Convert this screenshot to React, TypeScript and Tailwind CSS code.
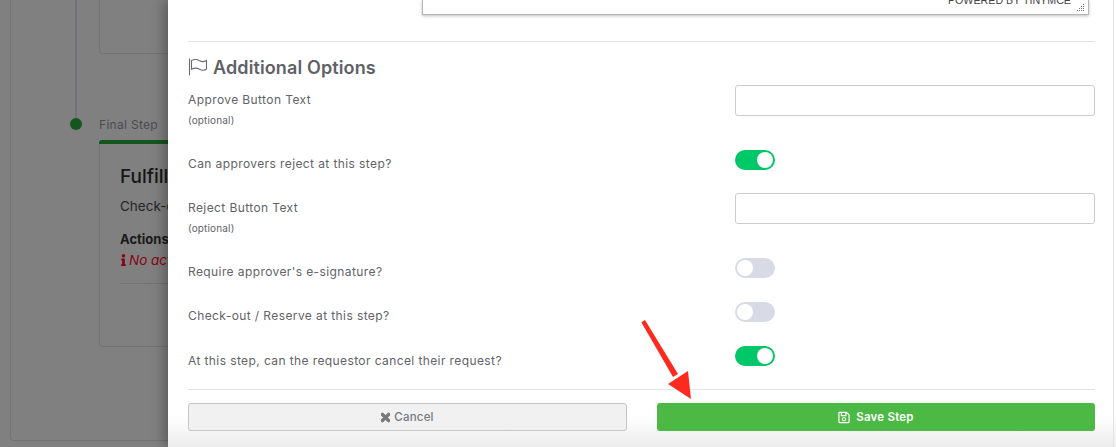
import { FaInfo, FaRegSave, FaTimes } from "react-icons/fa";

const font = { fontFamily: "Inter, 'Noto Sans', sans-serif" };

function Toggle({ on }: { on: boolean }) {
  return (
    <div className={`w-10 h-5 rounded-full flex items-center p-[2px] ${on ? "bg-[#00c767] justify-end" : "bg-[#d8dbe5] justify-start"}`}>
      <div className="w-4 h-4 rounded-full bg-white" />
    </div>
  );
}

function Row({ label, optional, height, pad, children }: { label: string; optional?: boolean; height: string; pad: string; children: React.ReactNode }) {
  return (
    <div className={`flex ${height}`}>
      <div className={`w-[547px] ${pad}`}>
        <div className="text-[12px] leading-5 tracking-[0.4px] text-[#626368]">{label}</div>
        {optional && <div className="mt-[3px] text-[10px] leading-[14px] tracking-[0.15px] text-[#626368]">(optional)</div>}
      </div>
      <div className="w-[360px]">{children}</div>
    </div>
  );
}

function TextBox() {
  return <input className="w-full h-[31px] rounded-[3px] border border-[#c9ccd6] bg-white" />;
}

export default function App() {
  return (
    <div className="relative w-[1116px] h-[447px] overflow-hidden bg-[#808080]" style={font}>
      {/* page behind the modal */}
      <div className="absolute inset-0 pl-[10px] pb-[6px]">
        <div className="h-full rounded-b-[4px] border-l border-b border-[#737373] pl-[58px] relative">
          <div className="flex">
            <div className="w-[24px] shrink-0 flex flex-col items-center -ml-[5px]">
              <div className="w-[2px] h-[118px] bg-[#72727a]" />
              <div className="w-3 h-3 rounded-full bg-[#15561f]" />
            </div>
            <div className="w-[300px] ml-[11px]">
              <div className="h-[54px] rounded-b-[4px] border-l border-b border-[#737373]" />
              <div className="mt-[61px] text-[12px] leading-5 tracking-[0.3px] text-[#4c4c4f]">Final Step</div>
              <div className="mt-[5px] h-[4px] rounded-t-[3px] bg-[#15561f]" />
              <div className="h-[203px] rounded-b-[4px] border-l border-b border-[#737373] pl-[20px] pt-[21px]">
                <div className="text-[19px] leading-6 font-medium text-[#161616]">Fulfillment</div>
                <div className="mt-[7px] text-[13.5px] leading-5 text-[#262626]">Check-out</div>
                <div className="mt-[13px] text-[13px] leading-5 font-bold text-[#1a1a1a]">Actions</div>
                <div className="mt-[1px] flex items-center text-[13.5px] leading-5 italic text-[#8a0012]">
                  <FaInfo className="w-[7px] h-[12px] mr-[2px]" />
                  <span>No actions</span>
                </div>
                <div className="mt-[13px] h-px bg-[#737373]" />
              </div>
            </div>
          </div>
        </div>
      </div>

      {/* modal panel */}
      <div className="absolute top-0 bottom-0 left-[168px] right-0 pl-[20px] bg-[linear-gradient(to_bottom,#ffffff_93%,#ececec_100%)] shadow-[-4px_0_12px_rgba(0,0,0,0.3)]">
        <div className="absolute top-0 bottom-0 right-[2px] w-px bg-[#e4e4e4]" />
        <div className="w-[907px]">
          <div className="relative ml-[234px] mr-[6px] h-[15px] border-x border-b border-[#b5b5b5] bg-white shadow-[0_1px_3px_rgba(0,0,0,0.25)] overflow-hidden">
            <span className="absolute right-[17px] -top-[6px] text-[10.7px] leading-3 whitespace-nowrap text-[#444]" style={{ fontFamily: "'Liberation Sans', sans-serif" }}>POWERED BY TINYMCE</span>
            <svg className="absolute right-[3px] bottom-[2px]" width="9" height="9" viewBox="0 0 9 9" fill="#777">
              <rect x="7" y="1" width="1" height="1" /><rect x="5" y="3" width="1" height="1" /><rect x="7" y="3" width="1" height="1" />
              <rect x="3" y="5" width="1" height="1" /><rect x="5" y="5" width="1" height="1" /><rect x="7" y="5" width="1" height="1" />
              <rect x="1" y="7" width="1" height="1" /><rect x="3" y="7" width="1" height="1" /><rect x="5" y="7" width="1" height="1" /><rect x="7" y="7" width="1" height="1" />
            </svg>
          </div>
          <div className="mt-[26px] h-px bg-[#e3e3e3]" />
          <div className="h-[43px] pt-[15px] flex items-start text-[18px] leading-[22px] font-semibold tracking-[0.12px] text-[#606166] -mb-px">
            <svg className="mt-[1px] mr-[5px]" width="20" height="18" viewBox="0 0 20 18" fill="none" stroke="#6a6b70" strokeWidth="1.1">
              <path d="M1.5 0.5V17.5" />
              <path d="M3.5 2.5C7 0.8 9.5 1.6 11.5 2.8C14 4 16.5 3.8 18.5 2.5V11C16.5 12.6 14 12.6 11.5 11.2C9.5 10 7 9.5 3.5 11.3Z" />
            </svg>
            Additional Options
          </div>
          <div className="pt-px">
            <Row label="Approve Button Text" optional height="h-[65px]" pad="pt-[5px]"><TextBox /></Row>
            <Row label="Can approvers reject at this step?" height="h-[43px]" pad="pt-[4px]"><Toggle on /></Row>
            <Row label="Reject Button Text" optional height="h-[65px]" pad="pt-[5px]"><TextBox /></Row>
            <Row label="Require approver's e-signature?" height="h-[44px]" pad="pt-[4px]"><Toggle on={false} /></Row>
            <Row label="Check-out / Reserve at this step?" height="h-[44px]" pad="pt-[4px]"><Toggle on={false} /></Row>
            <Row label="At this step, can the requestor cancel their request?" height="h-[43px]" pad="pt-[5px]"><Toggle on /></Row>
          </div>
          <div className="h-px bg-[#e3e3e3]" />
          <div className="mt-[13px] flex gap-[30px]">
            <button className="w-[439px] h-[28px] pt-px rounded-[3px] border border-[#c4c4c4] bg-[#f1f1f1] flex items-center justify-center gap-[4px] text-[11.5px] font-medium tracking-[0.2px] text-[#77787c]">
              <FaTimes className="w-[9px] h-[13px] stroke-[40]" />
              Cancel
            </button>
            <button className="w-[438px] h-[28px] pt-px rounded-[3px] bg-[#4bb944] flex items-center justify-center gap-[6px] text-[11.5px] font-semibold tracking-[0.2px] text-white">
              <FaRegSave className="w-[12px] h-[13px]" />
              Save Step
            </button>
          </div>
        </div>
      </div>

      {/* annotation arrow */}
      <svg className="absolute left-[630px] top-[310px]" width="80" height="100" viewBox="630 310 80 100" fill="#ff2a1f">
        <path d="M641.3 322.2L645 320L678 374L673 377Z" />
        <path d="M691 399L668 384L688 371Z" />
      </svg>
    </div>
  );
}
